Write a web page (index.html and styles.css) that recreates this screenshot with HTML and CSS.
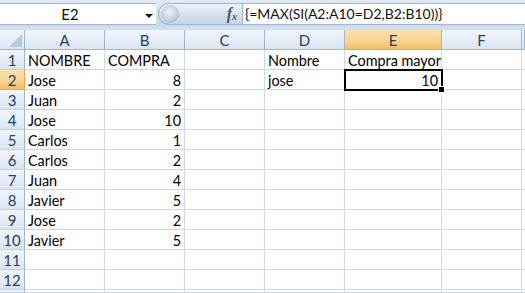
FILE: index.html
```html
<!DOCTYPE html>
<html lang="es">
<head>
<meta charset="UTF-8">
<title>Compra mayor</title>
<link rel="stylesheet" href="styles.css">
</head>
<body>

<div class="barraFormula">
    <div class="cuadroNombre">
        <span class="nombreCelda">E2</span>
        <span class="flecha"></span>
    </div>
    <div class="botonFx">
        <span class="burbuja"></span>
        <span class="fx">f<sub>x</sub></span>
    </div>
    <div class="formula">{=MAX(SI(A2:A10=D2,B2:B10))}</div>
</div>

<div class="hoja" id="hoja"></div>

<script>
    const hoja = document.getElementById("hoja");
    const columnas = ["A", "B", "C", "D", "E", "F", ""];

    // contenido de las celdas, clave = fila + columna
    const datos = {
        "1A": "NOMBRE", "1B": "COMPRA", "1D": "Nombre", "1E": "Compra mayor",
        "2A": "Jose", "2B": 8, "2D": "jose", "2E": 10,
        "3A": "Juan", "3B": 2,
        "4A": "Jose", "4B": 10,
        "5A": "Carlos", "5B": 1,
        "6A": "Carlos", "6B": 2,
        "7A": "Juan", "7B": 4,
        "8A": "Javier", "8B": 5,
        "9A": "Jose", "9B": 2,
        "10A": "Javier", "10B": 5
    };

    let html = '<div class="esquina"><span class="triangulo"></span></div>';
    columnas.forEach(function (c) {
        html += '<div class="encCol' + (c === "E" ? " activa" : "") + '">' + c + '</div>';
    });

    for (let fila = 1; fila <= 13; fila++) {
        // la fila 13 apenas asoma por abajo, sin numero
        const etiqueta = fila < 13 ? fila : "";
        html += '<div class="encFila' + (fila === 2 ? " activa" : "") + '">' + etiqueta + '</div>';
        columnas.forEach(function (c) {
            const valor = datos[fila + c];
            let clase = "celda";
            if (typeof valor === "number") clase += " numero";
            const activa = fila === 2 && c === "E";
            if (activa) clase += " seleccionada";
            html += '<div class="' + clase + '">' + (valor === undefined ? "" : valor) +
                (activa ? '<span class="relleno"></span>' : "") + '</div>';
        });
    }

    hoja.innerHTML = html;
</script>

</body>
</html>
```

FILE: styles.css
```css
body {
    margin: 0;
    width: 525px;
    height: 293px;
    overflow: hidden;
    background: #fff;
    font-family: Lato, "Open Sans", sans-serif;
}

.barraFormula {
    display: flex;
    height: 30px;
    box-sizing: border-box;
    padding: 3px 0 5px 0;
    background: linear-gradient(#dfe9f5, #dfe9f5 3px, #c9d8ec 24px, #d5e1f0);
}

.cuadroNombre {
    width: 156px;
    display: flex;
    align-items: center;
    position: relative;
    background: #fff;
    border-top: 1px solid #a3b6cf;
    border-bottom: 1px solid #a3b6cf;
    box-sizing: border-box;
}

.nombreCelda {
    flex: 1;
    text-align: center;
    font-size: 15px;
    color: #111;
    padding-right: 16px;
}

.flecha {
    position: absolute;
    left: 145px;
    top: 10px;
    width: 0;
    height: 0;
    border-left: 4px solid transparent;
    border-right: 4px solid transparent;
    border-top: 4px solid #111;
}

.botonFx {
    width: 84px;
    display: flex;
    align-items: center;
    justify-content: flex-end;
    position: relative;
    box-sizing: border-box;
    border-radius: 11px 0 0 11px;
    background: linear-gradient(#eef3fa, #d4e0ef 55%, #c4d4ea);
    border: 1px solid #a3b6cf;
    border-right: none;
    margin-left: 2px;
}

.burbuja {
    position: absolute;
    left: 2px;
    top: 1px;
    width: 18px;
    height: 18px;
    border-radius: 50%;
    background: radial-gradient(circle at 45% 40%, #f3f5f8, #b8c2cf 70%, #a4afbe);
}

.fx {
    font-family: "Liberation Serif", serif;
    font-style: italic;
    font-weight: bold;
    font-size: 16px;
    color: #4d5a6b;
    margin-right: 5px;
}

.fx sub {
    font-size: 10px;
    vertical-align: -1px;
}

.formula {
    flex: 1;
    background: #fff;
    border: 1px solid #a3b6cf;
    border-right: none;
    font-size: 14px;
    line-height: 20px;
    padding-left: 2px;
    color: #111;
}

.hoja {
    display: grid;
    grid-template-columns: 25px 80px 80px 80px 80px 97px 80px 3px;
    grid-template-rows: repeat(13, 20px) 3px;
    font-size: 14.4px;
}

.esquina,
.encCol,
.encFila {
    box-sizing: border-box;
    border-right: 1px solid #9eb6ce;
    border-bottom: 1px solid #9eb6ce;
    background: linear-gradient(#f1f5fb, #e4ecf7 60%, #dae4f1);
    color: #27415f;
    font-size: 15px;
    display: flex;
    align-items: center;
    justify-content: center;
}

.esquina {
    position: relative;
}

.triangulo {
    position: absolute;
    right: 2px;
    bottom: 2px;
    width: 0;
    height: 0;
    border-left: 13px solid transparent;
    border-bottom: 13px solid #b7c8dc;
}

.encCol.activa,
.encFila.activa {
    background: linear-gradient(#fbe1ae, #f9d494 55%, #f1c15f);
    border-color: #f2a738;
}

.encFila {
    border-bottom-color: #c6d3e3;
}

.celda {
    box-sizing: border-box;
    border-right: 1px solid #d0d7e5;
    border-bottom: 1px solid #d0d7e5;
    padding: 0 3px;
    line-height: 21px;
    white-space: nowrap;
    color: #000;
    position: relative;
    overflow: visible;
}

.numero {
    text-align: right;
}

.seleccionada {
    outline: 2px solid #000;
    outline-offset: -1px;
    z-index: 1;
}

.relleno {
    position: absolute;
    right: -4px;
    bottom: -4px;
    width: 5px;
    height: 5px;
    background: #000;
    border: 1px solid #fff;
}
```
